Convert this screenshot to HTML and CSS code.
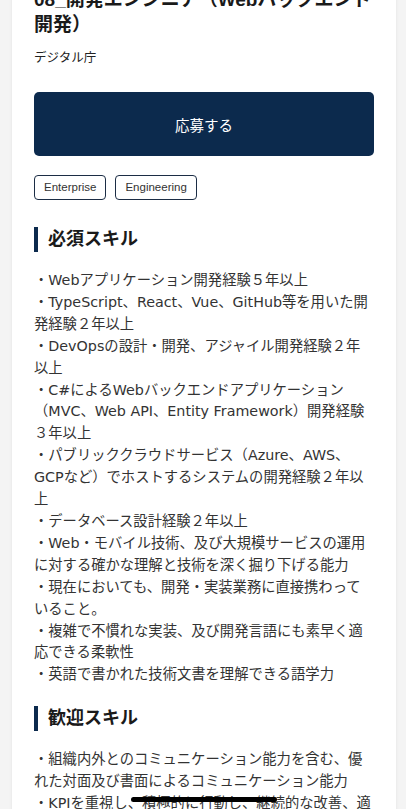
FILE: index.html
```html
<!DOCTYPE html>
<html lang="ja">
<head>
  <meta charset="UTF-8" />
  <meta name="viewport" content="width=device-width, initial-scale=1.0" />
  <title>08_開発エンジニア（Webバックエンド開発） - デジタル庁</title>
  <link rel="stylesheet" href="styles.css">
</head>
<body>
  <div class="page">
    <div class="card">
      <h1 class="title">08_開発エンジニア（Webバックエンド開発）</h1>
      <p class="company">デジタル庁</p>

      <button class="apply">応募する</button>

      <div class="tags">
        <span class="tag">Enterprise</span>
        <span class="tag">Engineering</span>
      </div>

      <h2 class="section">必須スキル</h2>
      <p class="body">・Webアプリケーション開発経験５年以上<br>・TypeScript、React、Vue、GitHub等を用いた開発経験２年以上<br>・DevOpsの設計・開発、アジャイル開発経験２年以上<br>・C#によるWebバックエンドアプリケーション（MVC、Web API、Entity Framework）開発経験 ３年以上<br>・パブリッククラウドサービス（Azure、AWS、GCPなど）でホストするシステムの開発経験２年以上<br>・データベース設計経験２年以上<br>・Web・モバイル技術、及び大規模サービスの運用に対する確かな理解と技術を深く掘り下げる能力<br>・現在においても、開発・実装業務に直接携わっていること。<br>・複雑で不慣れな実装、及び開発言語にも素早く適応できる柔軟性<br>・英語で書かれた技術文書を理解できる語学力</p>

      <h2 class="section">歓迎スキル</h2>
      <p class="body">・組織内外とのコミュニケーション能力を含む、優れた対面及び書面によるコミュニケーション能力<br>・KPIを重視し、積極的に行動し、継続的な改善、適切な意思決定を行うことができる能力<br>・チームでの開発経験</p>
    </div>
  </div>

  <div class="home-bar"></div>
</body>
</html>
```

FILE: styles.css
```css
body {
  font-family: "Liberation Sans", "Noto Sans CJK JP", sans-serif;
  background-color: #f4f4f4;
  margin: 0;
  padding: 0;
  color: #333;
}
.page {
  padding: 0 10px 0 12px;
  margin-top: -40px;
}
.card {
  background-color: #fff;
  padding: 27px 22px 40px;
  box-shadow: 0 0 3px rgba(0, 0, 0, 0.08);
}
.title {
  font-size: 19px;
  line-height: 25px;
  font-weight: 700;
  color: #1a1a1a;
  margin: 0;
}
.company {
  font-size: 12.5px;
  line-height: 18px;
  margin: 12px 0 0;
  color: #222;
}
.apply {
  display: block;
  width: 100%;
  height: 64px;
  margin-top: 25px;
  border: none;
  border-radius: 5px;
  background-color: #0c2a4d;
  color: #fff;
  font-family: inherit;
  font-size: 14.5px;
}
.tags {
  display: flex;
  gap: 9px;
  margin-top: 19px;
}
.tag {
  font-size: 11.5px;
  line-height: 23px;
  padding: 0 9px;
  border: 1px solid #1c2d45;
  border-radius: 4px;
  color: #333;
}
.section {
  font-size: 18px;
  font-weight: 700;
  line-height: 25px;
  color: #1a1a1a;
  margin: 27px 0 0;
  padding-left: 10px;
  border-left: 4px solid #0c2a4d;
}
.body {
  font-family: "DejaVu Sans", "Noto Sans CJK JP", sans-serif;
  font-size: 14.3px;
  line-height: 21.9px;
  margin: 18px 0 0;
  color: #333;
}
.body + .section {
  margin-top: 20px;
}
.home-bar {
  position: fixed;
  left: 131px;
  bottom: 7px;
  width: 146px;
  height: 5px;
  border-radius: 3px;
  background-color: #000;
}
```
